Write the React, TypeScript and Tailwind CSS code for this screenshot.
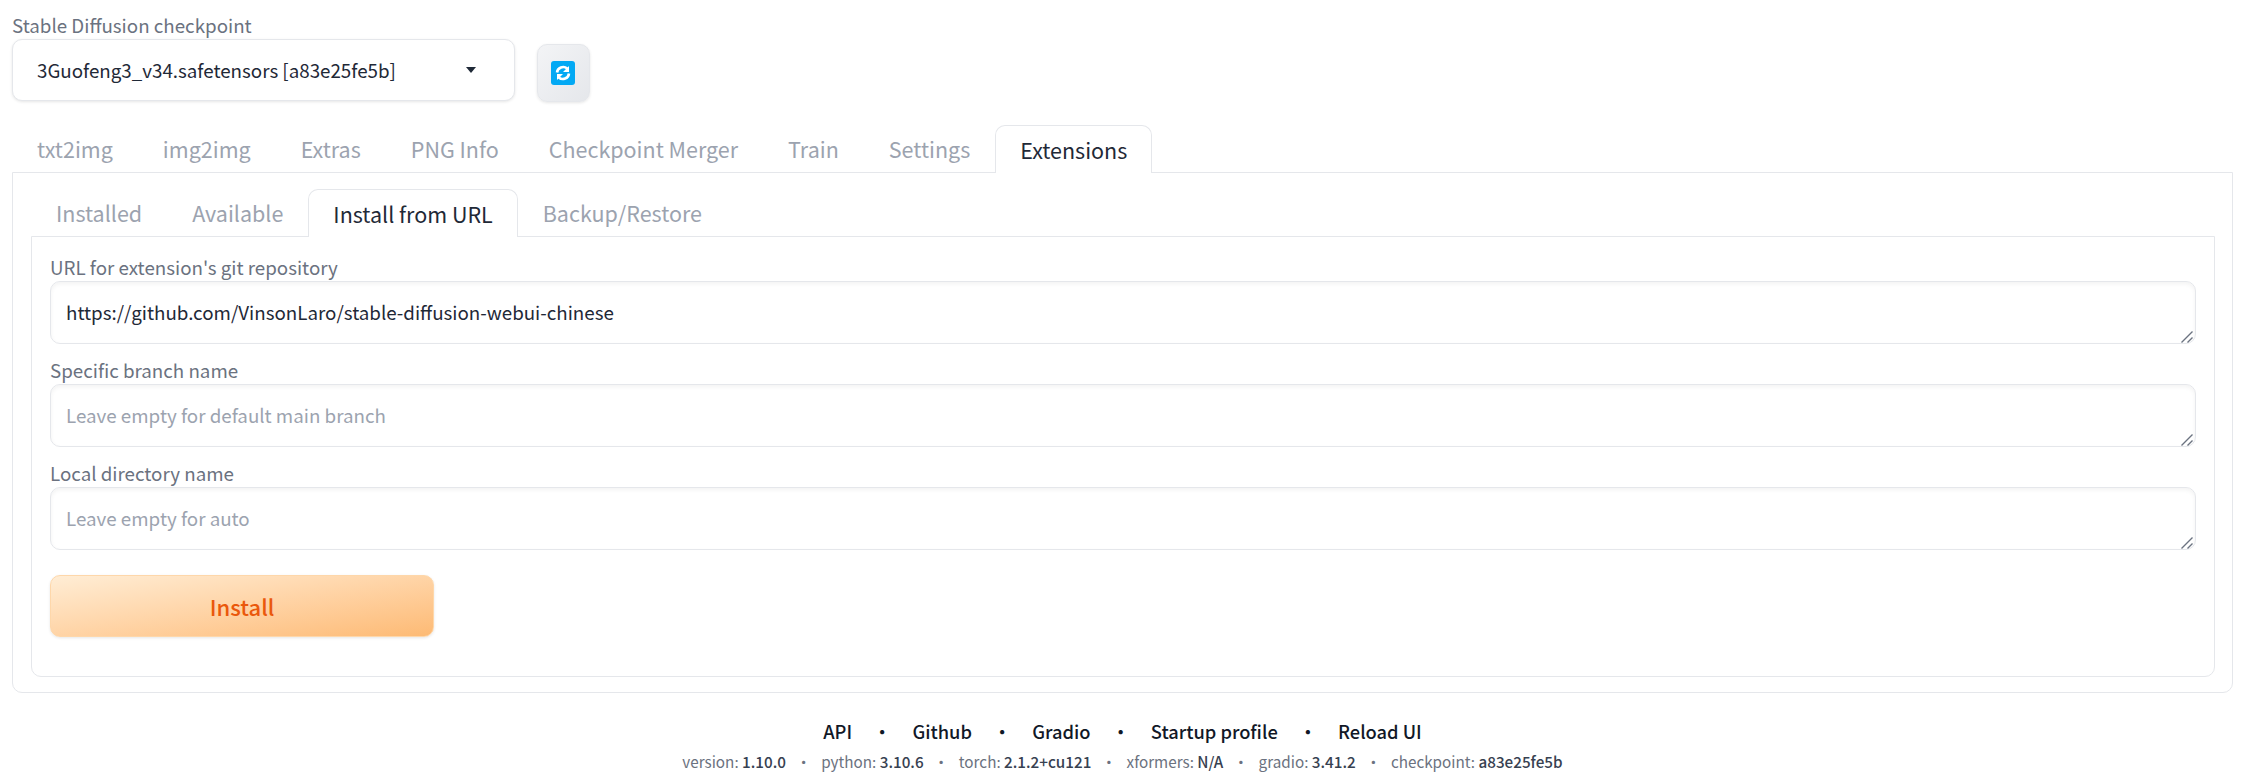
const font = "font-['Noto_Sans_CJK_SC','Noto_Sans',sans-serif]";

const mainTabs = ['txt2img', 'img2img', 'Extras', 'PNG Info', 'Checkpoint Merger', 'Train', 'Settings', 'Extensions'];
const subTabs = ['Installed', 'Available', 'Install from URL', 'Backup/Restore'];
const footerLinks = ['API', 'Github', 'Gradio', 'Startup profile', 'Reload UI'];
const versions = [
  ['version: ', '1.10.0'],
  ['python: ', '3.10.6'],
  ['torch: ', '2.1.2+cu121'],
  ['xformers: ', 'N/A'],
  ['gradio: ', '3.41.2'],
  ['checkpoint: ', 'a83e25fe5b'],
];

function RefreshIcon() {
  return (
    <svg width="24" height="24" viewBox="0 0 24 24">
      <rect width="24" height="24" rx="3" fill="#03a9f4" />
      <path d="M6 11.5a6.2 6.2 0 0 1 10.2-4" fill="none" stroke="#fff" strokeWidth="2.6" />
      <path d="M18 5v6h-6z" fill="#fff" />
      <path d="M18 12.5a6.2 6.2 0 0 1-10.2 4" fill="none" stroke="#fff" strokeWidth="2.6" />
      <path d="M6 19v-6h6z" fill="#fff" />
    </svg>
  );
}

function TabBar({ tabs, active }: { tabs: string[]; active: string }) {
  return (
    <div className="flex">
      {tabs.map((tab) =>
        tab === active ? (
          <button
            key={tab}
            className="relative -mb-px h-[48px] rounded-t-[10px] border border-b-0 border-[#e5e7eb] bg-white px-[24px] pt-[1px] text-[21.5px] text-[#1f2937]"
          >
            {tab}
          </button>
        ) : (
          <button key={tab} className="h-[47px] px-[25px] pt-[2px] text-[21.5px] text-[#9ca3af]">
            {tab}
          </button>
        ),
      )}
    </div>
  );
}

function Field({ label, value, placeholder }: { label: string; value?: string; placeholder?: string }) {
  return (
    <label className="block">
      <span className="block h-[22px] text-[18.75px] leading-[22px] text-[#6b7280]">{label}</span>
      <div className="relative mt-[3px]">
        <textarea
          rows={1}
          defaultValue={value}
          placeholder={placeholder}
          className="block h-[63px] w-full resize-y rounded-[10px] border border-[#e5e7eb] bg-white px-[15px] py-[17px] text-[18.75px] leading-[25px] text-[#1f2937] shadow-[inset_0_2px_4px_rgba(0,0,0,0.05)] outline-none placeholder:text-[#9ca3af] [&::-webkit-resizer]:bg-transparent"
        />
        {/* the handle of the textarea, darker than the native one */}
        <svg width="12" height="12" viewBox="0 0 12 12" className="pointer-events-none absolute right-[3px] bottom-[1px]">
          <path d="M0.5 11.5L11.5 0.5M6.5 11.5L11.5 6.5" stroke="#6b7280" strokeWidth="1.4" fill="none" />
        </svg>
      </div>
    </label>
  );
}

export default function App() {
  return (
    <div className={`${font} h-[784px] overflow-hidden bg-white pt-[14px] pr-[11px] pl-3`}>
      <div className="flex items-end gap-[22px]">
        <div className="w-[503px]">
          <div className="h-[25px] text-[18.75px] leading-[22px] text-[#6b7280]">Stable Diffusion checkpoint</div>
          <div className="flex h-[62px] items-center justify-between rounded-[10px] border border-[#e5e7eb] bg-white pr-[38px] pl-[24px] text-[18.75px] text-[#1f2937] shadow-[0_1px_3px_rgba(0,0,0,0.1)]">
            <span>3Guofeng3_v34.safetensors [a83e25fe5b]</span>
            <span className="h-0 w-0 border-x-[5px] border-t-[6px] border-x-transparent border-t-[#1f2937]" />
          </div>
        </div>
        <button className="mb-[-1px] flex h-[58px] w-[53px] items-center justify-center rounded-[10px] border border-[#e5e7eb] bg-linear-to-br from-[#f3f4f6] to-[#e5e7eb] pr-[1px] shadow-[0_1px_3px_rgba(0,0,0,0.1)]">
          <RefreshIcon />
        </button>
      </div>

      <div className="mt-[24px]">
        <TabBar tabs={mainTabs} active="Extensions" />
        <div className="rounded-b-[10px] border border-[#e5e7eb] pt-[16px] pr-[17px] pb-[15px] pl-[18px]">
          <TabBar tabs={subTabs} active="Install from URL" />
          <div className="rounded-b-[10px] border border-[#e5e7eb] pt-[19px] pr-[18px] pb-[39px] pl-[18px]">
            <div className="flex flex-col gap-[15px]">
              <Field label="URL for extension's git repository" value="https://github.com/VinsonLaro/stable-diffusion-webui-chinese" />
              <Field label="Specific branch name" placeholder="Leave empty for default main branch" />
              <Field label="Local directory name" placeholder="Leave empty for auto" />
            </div>
            <button className="mt-[25px] h-[62px] w-[384px] rounded-[10px] border border-[#fed7aa] bg-linear-to-br from-[#ffedd5] to-[#fdba74] text-[22px] font-medium text-[#ea580c] shadow-[0_1px_3px_rgba(0,0,0,0.1)]">
              Install
            </button>
          </div>
        </div>
      </div>

      <div className="mt-[26px] flex justify-center text-[18.3px] leading-[25px] font-medium text-[#111827]">
        {footerLinks.map((link, i) => (
          <span key={link}>
            {i > 0 && <span className="mx-[21px]">•</span>}
            {link}
          </span>
        ))}
      </div>
      <div className="mt-[7px] flex justify-center text-[15.25px] leading-[20px] text-[#6b7280]">
        {versions.map(([name, value], i) => (
          <span key={name}>
            {i > 0 && <span className="mx-[10px]">•</span>}
            {name}
            <span className="font-medium text-[#374151]">{value}</span>
          </span>
        ))}
      </div>
    </div>
  );
}
